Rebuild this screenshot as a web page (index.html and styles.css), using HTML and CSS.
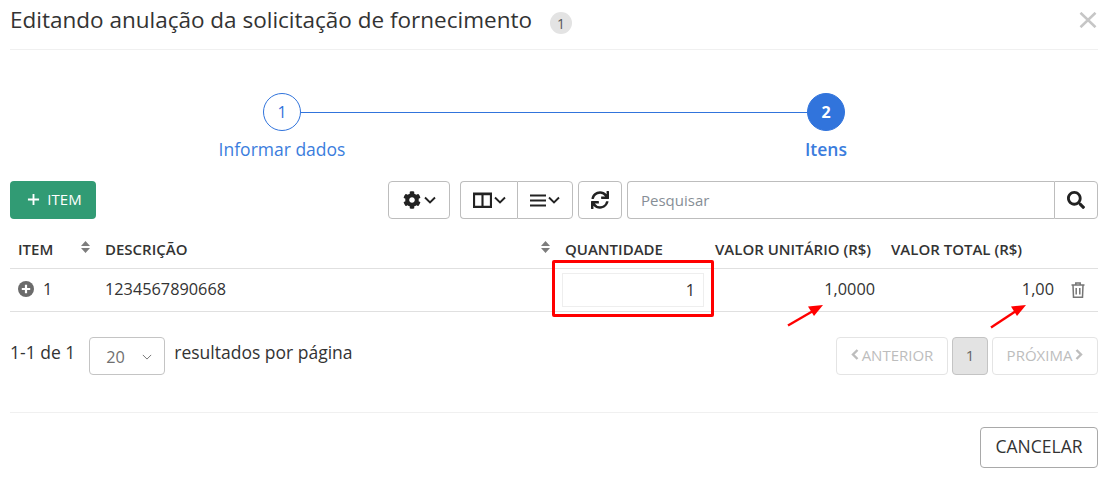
FILE: index.html
```html
<!DOCTYPE html>
<html lang="pt-BR">
<head>
<meta charset="utf-8">
<title>Editando anulação</title>
<link rel="stylesheet" href="styles.css">
</head>
<body>
<div class="modal">
  <header class="head">
    <h1 class="title">Editando anulação da solicitação de fornecimento</h1>
    <span class="badge">1</span>
    <svg class="close" viewBox="0 0 18 16"><path d="M1.500 .8 16.500 15.200M16.500 .8 1.500 15.200"/></svg>
  </header>

  <section class="stepper">
    <span class="circle">1</span>
    <span class="line"></span>
    <span class="circle active">2</span>
    <span class="step-label first">Informar dados</span>
    <span class="step-label strong">Itens</span>
  </section>

  <section class="toolbar">
    <button class="btn-add"><svg class="ic-plus" viewBox="0 0 14 14"><path d="M7 1v12M1 7h12"/></svg>ITEM</button>
    <div class="tools">
      <button class="tool w62">
        <svg class="ic" viewBox="0 0 512 512"><path d="M487.4 315.7l-42.6-24.6c4.3-23.2 4.3-47 0-70.2l42.6-24.6c4.9-2.8 7.1-8.6 5.5-14-11.1-35.6-30-67.8-54.7-94.6-3.8-4.1-10-5.1-14.8-2.3L380.8 110c-17.9-15.4-38.5-27.3-60.8-35.1V25.8c0-5.6-3.9-10.5-9.4-11.7-36.7-8.2-74.3-7.8-109.2 0-5.5 1.2-9.4 6.1-9.4 11.7V75c-22.2 7.9-42.8 19.8-60.8 35.1L88.7 85.5c-4.9-2.8-11-1.9-14.8 2.3-24.7 26.7-43.6 58.9-54.7 94.6-1.7 5.4.6 11.2 5.5 14L67.3 221c-4.3 23.2-4.3 47 0 70.2l-42.6 24.6c-4.9 2.8-7.1 8.6-5.5 14 11.1 35.6 30 67.8 54.7 94.6 3.8 4.1 10 5.1 14.8 2.3l42.6-24.6c17.9 15.4 38.5 27.3 60.8 35.1v49.2c0 5.6 3.9 10.5 9.4 11.7 36.7 8.2 74.3 7.8 109.2 0 5.5-1.2 9.4-6.1 9.4-11.7v-49.2c22.2-7.9 42.8-19.8 60.8-35.1l42.6 24.6c4.9 2.8 11 1.9 14.8-2.3 24.7-26.7 43.6-58.9 54.7-94.6 1.5-5.5-.7-11.3-5.6-14.1zM256 336c-44.1 0-80-35.9-80-80s35.9-80 80-80 80 35.9 80 80-35.9 80-80 80z"/></svg>
        <svg class="chev" viewBox="0 0 12 8"><path d="M1 1.500 6 6.500 11 1.500"/></svg>
      </button>
      <div class="group">
        <button class="tool w57 seg-l">
          <svg class="ic-cols" viewBox="0 0 18 15"><path d="M1 1.500h16v12.500H1zM9 1.500v12.500"/><path d="M1 2h16"/></svg>
          <svg class="chev" viewBox="0 0 12 8"><path d="M1 1.500 6 6.500 11 1.500"/></svg>
        </button>
        <button class="tool w56 seg-r">
          <svg class="ic-bars" viewBox="0 0 16 13"><path d="M0 1.500h16M0 6.500h16M0 11.500h16"/></svg>
          <svg class="chev" viewBox="0 0 12 8"><path d="M1 1.500 6 6.500 11 1.500"/></svg>
        </button>
      </div>
      <button class="tool w44">
        <svg class="ic" viewBox="0 0 512 512"><path d="M440.65 12.57l4 82.77A247.16 247.16 0 0 0 255.83 8C134.73 8 33.91 94.92 12.29 209.82A12 12 0 0 0 24.09 224h49.05a12 12 0 0 0 11.67-9.26 175.91 175.91 0 0 1 317-56.94l-101.46-4.86a12 12 0 0 0-12.57 12v47.41a12 12 0 0 0 12 12H500a12 12 0 0 0 12-12V12a12 12 0 0 0-12-12h-47.37a12 12 0 0 0-11.98 12.57zM255.83 432a175.61 175.61 0 0 1-146-77.8l101.8 4.87a12 12 0 0 0 12.57-12v-47.4a12 12 0 0 0-12-12H12a12 12 0 0 0-12 12V500a12 12 0 0 0 12 12h47.35a12 12 0 0 0 12-12.6l-4.15-82.57A247.17 247.17 0 0 0 255.83 504c121.11 0 221.93-86.92 243.55-201.82a12 12 0 0 0-11.8-14.18h-49.05a12 12 0 0 0-11.67 9.26A175.86 175.86 0 0 1 255.83 432z"/></svg>
      </button>
      <div class="search">
        <input class="search-input" type="text" placeholder="Pesquisar">
        <button class="search-btn">
          <svg class="ic" viewBox="0 0 512 512"><path d="M505 442.7L405.3 343c-4.5-4.5-10.6-7-17-7H372c27.6-35.3 44-79.7 44-128C416 93.1 322.9 0 208 0S0 93.1 0 208s93.1 208 208 208c48.3 0 92.7-16.4 128-44v16.3c0 6.4 2.5 12.5 7 17l99.7 99.7c9.4 9.4 24.6 9.4 33.9 0l28.3-28.3c9.4-9.4 9.4-24.6.1-34zM208 336c-70.7 0-128-57.2-128-128 0-70.7 57.2-128 128-128 70.7 0 128 57.2 128 128 0 70.7-57.2 128-128 128z"/></svg>
        </button>
      </div>
    </div>
  </section>

  <table class="grid">
    <colgroup>
      <col class="c1"><col class="c2"><col class="c3"><col class="c4"><col class="c5"><col class="c6">
    </colgroup>
    <thead>
      <tr>
        <th><div class="th-flex first-sort">ITEM<svg class="sort" viewBox="0 0 9 12"><path d="M4.500 0 9 5H0zM4.500 12 0 7h9z"/></svg></div></th>
        <th><div class="th-flex">DESCRIÇÃO<svg class="sort" viewBox="0 0 9 12"><path d="M4.500 0 9 5H0zM4.500 12 0 7h9z"/></svg></div></th>
        <th class="th-tight">QUANTIDADE</th>
        <th class="th-tight">VALOR UNITÁRIO (R$)</th>
        <th>VALOR TOTAL (R$)</th>
        <th></th>
      </tr>
    </thead>
    <tbody>
      <tr>
        <td><div class="item-cell"><svg class="ic-expand" viewBox="0 0 16 16"><circle cx="8" cy="8" r="8"/><path d="M8 3.800v8.400M3.800 8h8.400"/></svg>1</div></td>
        <td>1234567890668</td>
        <td class="qty-cell"><input class="qty" type="text" value="1"></td>
        <td class="num">1,0000</td>
        <td class="num">1,00</td>
        <td class="trash-cell"><svg class="ic-trash" viewBox="0 0 14 16"><path d="M.5 3h13M4.800 3V1h4.400v2M2 3l.5 12.300h9L12 3M5.200 6v6.500M8.800 6v6.500"/></svg></td>
      </tr>
    </tbody>
  </table>

  <section class="pager">
    <span class="count">1-1 de 1</span>
    <div class="select">20<svg class="sel-chev" viewBox="0 0 12 7"><path d="M1 1 6 6 11 1"/></svg></div>
    <span class="per-page">resultados por página</span>
    <div class="pages">
      <button class="pg w112"><svg class="pg-ic" viewBox="0 0 8 11"><path d="M6.500 1 2 5.500 6.500 10"/></svg>ANTERIOR</button>
      <button class="pg cur">1</button>
      <button class="pg w106">PRÓXIMA<svg class="pg-ic" viewBox="0 0 8 11"><path d="M1.500 1 6 5.500 1.500 10"/></svg></button>
    </div>
  </section>

  <footer class="foot">
    <button class="cancel">CANCELAR</button>
  </footer>
</div>

<div class="mark-box"></div>
<svg class="mark-arrows" viewBox="0 0 1112 477">
  <path d="M788 325.500 813 311"/><path class="head-a" d="M823 305 808 306.500 814 316z"/>
  <path d="M991 327.500 1016 311"/><path class="head-a" d="M1026 305 1011 306.500 1017 316z"/>
</svg>
</body>
</html>
```
FILE: styles.css
```css
* { box-sizing: border-box; }
html, body { margin: 0; height: 100%; }
body {
  background: #fff;
  color: #333;
  font-family: "Open Sans", "Liberation Sans", sans-serif;
  font-size: 16px;
  overflow: hidden;
}
button { font-family: inherit; cursor: pointer; }
.modal { padding: 0 14px 0 10px; }

.head {
  display: flex;
  align-items: center;
  height: 50px;
  border-bottom: 1px solid #f0f0f0;
}
.title { margin: 0 0 9px; font-size: 22.5px; font-weight: 400; line-height: 30px; color: #333; }
.badge {
  width: 22px; height: 22px; margin: 0 0 3px 18px;
  border-radius: 50%;
  background: #e3e3e3;
  font-size: 14px; line-height: 24px; text-align: center; color: #555;
}
.close { width: 18px; height: 16px; margin: 0 1px 10px auto; fill: none; stroke: #c6c6c6; stroke-width: 2.6; }

.stepper {
  display: grid;
  grid-template-columns: 38px 506px 38px;
  grid-template-rows: 38px auto;
  align-content: start;
  align-items: center;
  padding: 43px 0 0 253px;
  height: 131px;
}
.circle {
  width: 38px; height: 38px;
  border: 1px solid #3174dc;
  border-radius: 50%;
  color: #3174dc;
  font-size: 16px; line-height: 36px; text-align: center;
}
.circle.active { background: #3174dc; color: #fff; font-weight: 700; }
.line { height: 1px; background: #3174dc; }
.step-label {
  grid-row: 2;
  justify-self: center;
  white-space: nowrap;
  margin-top: 6px;
  font-size: 17.5px; line-height: 25px;
  color: #3b7ddd;
}
.step-label.first { grid-column: 1; }
.step-label.strong { grid-column: 3; font-weight: 600; }

.toolbar { display: flex; justify-content: space-between; height: 38px; }
.btn-add {
  display: flex; align-items: center; justify-content: center;
  width: 86px; height: 38px;
  border: 0; border-radius: 4px;
  background: #319b74; color: #fff;
  font-size: 15px;
  padding: 0 0 2px 3px;
}
.ic-plus { width: 13px; height: 13px; margin-right: 7px; fill: none; stroke: #fff; stroke-width: 2; }
.tools { display: flex; gap: 5px; }
.tool {
  display: flex; align-items: center; justify-content: center; gap: 3px;
  height: 38px; padding: 0;
  background: #fff;
  border: 1px solid #bdbdbd; border-radius: 4px;
}
.group { display: flex; margin: 0 0 0 5px; }
.w62 { width: 62px; }
.w57 { width: 57px; }
.w56 { width: 56px; }
.w44 { width: 44px; }
.seg-l { border-radius: 4px 0 0 4px; border-right: 0; gap: 2px; }
.seg-r { border-radius: 0 4px 4px 0; gap: 2px; }
.ic { width: 18px; height: 18px; fill: #222; }
.chev { width: 12px; height: 8px; fill: none; stroke: #222; stroke-width: 1.9; }
.ic-cols { width: 19px; height: 16px; fill: none; stroke: #222; stroke-width: 2; }
.ic-bars { width: 16px; height: 13px; fill: none; stroke: #222; stroke-width: 2.2; }
.search { display: flex; width: 471px; }
.search-input {
  width: 427px; height: 38px;
  padding: 0 13px;
  border: 1px solid #bdbdbd; border-right: 0;
  border-radius: 4px 0 0 4px;
  font-family: inherit; font-size: 15px; color: #333;
  outline: 0;
}
.search-input::placeholder { color: #868e96; opacity: 1; }
.search-btn {
  display: flex; align-items: center; justify-content: center;
  width: 44px; height: 38px; padding: 0;
  background: #fff;
  border: 1px solid #bdbdbd; border-radius: 0 4px 4px 0;
}

.grid { width: 1088px; margin-top: 11px; border-collapse: collapse; table-layout: fixed; }
.c1 { width: 87px; } .c2 { width: 461px; } .c3 { width: 150px; }
.c4 { width: 175px; } .c5 { width: 179px; } .c6 { width: 36px; }
.grid th {
  height: 38px; padding: 0 8px;
  border-bottom: 1px solid #e0e0e0;
  font-size: 15px; font-weight: 600; text-align: left; color: #333;
  white-space: nowrap;
}
.grid th.th-tight { padding-left: 7px; }
.th-flex { display: flex; align-items: center; justify-content: space-between; }
.first-sort { margin-right: -1px; }
.sort { width: 9px; height: 12px; margin: 0 0 4px; fill: #7d7d7d; }
.grid td {
  height: 43px; padding: 0 8px 2px;
  border-bottom: 1px solid #e0e0e0;
  font-size: 16.3px; color: #333;
}
.item-cell { display: flex; align-items: center; gap: 9px; }
.ic-expand { width: 16px; height: 16px; }
.ic-expand circle { fill: #6b6b6b; }
.ic-expand path { fill: none; stroke: #fff; stroke-width: 2.2; }
.grid td.qty-cell { padding: 0 4px; }
.qty {
  display: block;
  width: 142px; height: 34px;
  padding: 0 8px;
  border: 1px solid #eee;
  background: #fff;
  font-family: inherit; font-size: 16.3px; color: #333;
  text-align: right;
  outline: 0;
}
.grid td.num { text-align: right; }
.grid td.trash-cell { padding: 0 0 0 9px; }
.ic-trash { display: block; width: 14px; height: 16px; fill: none; stroke: #757575; stroke-width: 1.5; }

.pager {
  display: flex; align-items: center;
  height: 38px; margin-top: 25px;
  font-size: 17.5px; color: #333;
}
.count { margin: 0 14px 7px 0; }
.per-page { margin-bottom: 7px; }
.select {
  display: flex; align-items: center;
  width: 76px; height: 38px; margin: 0 9px 0 0;
  padding: 2px 0 0 16px;
  border: 1px solid #c4c4c4; border-radius: 4px;
  color: #6f6f6f;
  font-size: 16.3px;
}
.sel-chev { width: 10px; height: 6px; margin-left: 17px; fill: none; stroke: #777; stroke-width: 1.2; }
.pages { display: flex; gap: 4px; margin: 0 0 0 auto; }
.pg {
  display: flex; align-items: center; justify-content: center; gap: 3px;
  height: 38px; padding: 0 0 2px;
  background: #fff;
  border: 1px solid #e4e4e4; border-radius: 4px;
  font-size: 15px; color: #bdbdbd;
}
.w112 { width: 112px; }
.w106 { width: 106px; }
.cur { width: 36px; background: #e3e3e3; border-color: #c4c4c4; color: #666; }
.pg-ic { width: 8px; height: 11px; fill: none; stroke: #bdbdbd; stroke-width: 2.4; }

.foot {
  display: flex; justify-content: flex-end;
  height: 65px; margin-top: 37px; padding-top: 14px;
  border-top: 1px solid #f0f0f0;
}
.cancel {
  width: 118px; height: 41px; padding: 0 0 2px;
  background: #fff;
  border: 1px solid #a9a9a9; border-radius: 4px;
  font-size: 17.5px; color: #333;
}

.mark-box {
  position: absolute; left: 552px; top: 260px;
  width: 162px; height: 57px;
  border: 3px solid #f00; border-radius: 2px;
}
.mark-arrows { position: absolute; left: 0; top: 0; width: 1112px; height: 477px; pointer-events: none; fill: none; stroke: #f00; stroke-width: 2.4; }
.mark-arrows .head-a { fill: #f00; stroke: none; }
```
